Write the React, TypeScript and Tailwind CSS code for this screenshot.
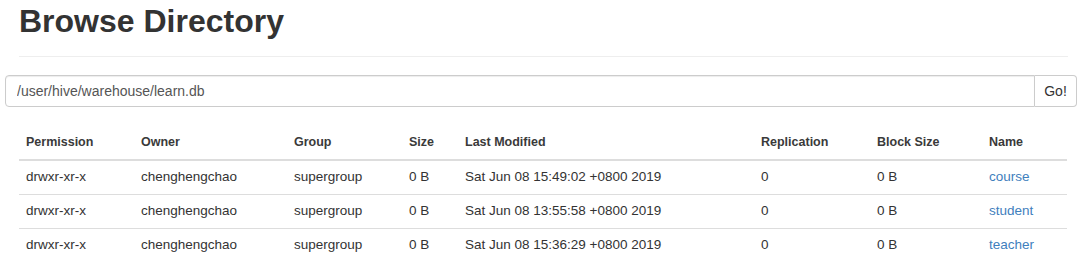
import { useState } from "react"

const rows = [
  { perm: "drwxr-xr-x", owner: "chenghengchao", group: "supergroup", size: "0 B", modified: "Sat Jun 08 15:49:02 +0800 2019", repl: "0", block: "0 B", name: "course" },
  { perm: "drwxr-xr-x", owner: "chenghengchao", group: "supergroup", size: "0 B", modified: "Sat Jun 08 13:55:58 +0800 2019", repl: "0", block: "0 B", name: "student" },
  { perm: "drwxr-xr-x", owner: "chenghengchao", group: "supergroup", size: "0 B", modified: "Sat Jun 08 15:36:29 +0800 2019", repl: "0", block: "0 B", name: "teacher" },
]

const headers = ["Permission", "Owner", "Group", "Size", "Last Modified", "Replication", "Block Size", "Name"]
const widths = [115, 153, 115, 56, 296, 116, 112, 85]

export default function App() {
  const [path, setPath] = useState("/user/hive/warehouse/learn.db")

  return (
    <div
      className="w-[1080px] h-[272px] overflow-hidden bg-white pt-[4px] text-[#333]"
      style={{ fontFamily: '"Liberation Sans", Arial, sans-serif' }}
    >
      <h1 className="ml-[19px] text-[32px] leading-[35px] font-bold text-[#333]">Browse Directory</h1>
      <hr className="ml-[19px] mr-[12px] mt-[17px] border-0 border-t border-[#eee]" />

      {/* path input group */}
      <div className="ml-[5px] mr-[3px] mt-[18px] flex h-[32px]">
        <input
          value={path}
          onChange={(e) => setPath(e.target.value)}
          className="flex-1 rounded-l-[4px] border border-[#ccc] px-[11px] text-[14px] text-[#555] outline-none shadow-[inset_0_1px_1px_rgba(0,0,0,0.075)]"
        />
        <button className="w-[42px] rounded-r-[4px] border border-l-0 border-[#ccc] bg-white text-[14px] text-[#333]">
          Go!
        </button>
      </div>

      <table className="ml-[19px] mt-[17px] w-[1048px] table-fixed border-collapse text-[13.5px]">
        <colgroup>
          {widths.map((w, i) => (
            <col key={i} style={{ width: w }} />
          ))}
        </colgroup>
        <thead>
          <tr className="h-[36px] border-b-2 border-[#ddd]">
            {headers.map((h) => (
              <th key={h} className="px-[7px] pt-[2px] text-left align-middle text-[12.5px] font-bold text-[#3a3a3a]">
                {h}
              </th>
            ))}
          </tr>
        </thead>
        <tbody>
          {rows.map((r, i) => (
            <tr key={r.name} className={i < rows.length - 1 ? "h-[34px] border-b border-[#ddd]" : "h-[34px]"}>
              <td className="px-[7px]">{r.perm}</td>
              <td className="px-[7px]">{r.owner}</td>
              <td className="px-[7px]">{r.group}</td>
              <td className="px-[7px]">{r.size}</td>
              <td className="px-[7px]">{r.modified}</td>
              <td className="px-[7px]">{r.repl}</td>
              <td className="px-[7px]">{r.block}</td>
              <td className="px-[7px]">
                <a href="#" className="text-[#3f80bd]">
                  {r.name}
                </a>
              </td>
            </tr>
          ))}
        </tbody>
      </table>
    </div>
  )
}
